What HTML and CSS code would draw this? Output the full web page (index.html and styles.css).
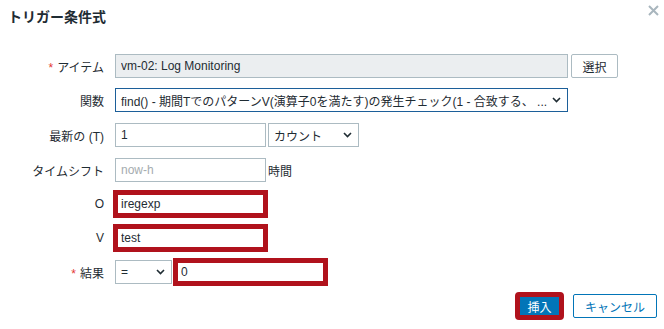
FILE: index.html
```html
<!DOCTYPE html>
<html lang="ja">
<head>
    <meta charset="UTF-8">
    <title>トリガー条件式</title>
    <link rel="stylesheet" href="styles.css">
</head>
<body>
    <div class="dialog">
        <div class="dialog-head">
            <h4>トリガー条件式</h4>
            <button class="close" title="閉じる">
                <svg width="11" height="11" viewBox="0 0 11 11"><path d="M1 1 L10 10 M10 1 L1 10" stroke="#a9b6be" stroke-width="2" fill="none"/></svg>
            </button>
        </div>

        <div class="form">
            <div class="row">
                <label class="req">アイテム</label>
                <div class="field">
                    <input type="text" class="w-wide" value="vm-02: Log Monitoring" readonly>
                    <button class="btn-alt">選択</button>
                </div>
            </div>
            <div class="row">
                <label>関数</label>
                <div class="field">
                    <div class="select w-wide focused">
                        <span>find() - 期間TでのパターンV(演算子0を満たす)の発生チェック(1 - 合致する、 ...</span>
                        <svg class="chev" width="9" height="6" viewBox="0 0 9 6"><path d="M1 1 L4.5 4.5 L8 1" stroke="#1f2c33" stroke-width="1.6" fill="none"/></svg>
                    </div>
                </div>
            </div>
            <div class="row row-latest">
                <label>最新の (T)</label>
                <div class="field">
                    <input type="text" class="w-mid" value="1">
                    <div class="select w-unit">
                        <span>カウント</span>
                        <svg class="chev" width="9" height="6" viewBox="0 0 9 6"><path d="M1 1 L4.5 4.5 L8 1" stroke="#1f2c33" stroke-width="1.6" fill="none"/></svg>
                    </div>
                </div>
            </div>
            <div class="row">
                <label>タイムシフト</label>
                <div class="field">
                    <input type="text" class="w-mid" placeholder="now-h">
                    <span class="suffix">時間</span>
                </div>
            </div>
            <div class="row">
                <label>O</label>
                <div class="field">
                    <input type="text" class="w-mid marked" value="iregexp">
                </div>
            </div>
            <div class="row">
                <label>V</label>
                <div class="field">
                    <input type="text" class="w-mid marked" value="test">
                </div>
            </div>
            <div class="row">
                <label class="req">結果</label>
                <div class="field">
                    <div class="select w-op">
                        <span>=</span>
                        <svg class="chev" width="9" height="6" viewBox="0 0 9 6"><path d="M1 1 L4.5 4.5 L8 1" stroke="#1f2c33" stroke-width="1.6" fill="none"/></svg>
                    </div>
                    <input type="text" class="w-mid marked" value="0">
                </div>
            </div>
        </div>

        <div class="dialog-foot">
            <button class="btn-main marked">挿入</button>
            <button class="btn-cancel">キャンセル</button>
        </div>
    </div>
</body>
</html>
```
FILE: styles.css
```css
body {
    margin: 0;
    background: #fff;
    font-family: 'Liberation Sans', Arial, 'Noto Sans CJK JP', sans-serif;
    font-size: 12px;
    color: #1f2c33;
}
.dialog {
    width: 664px;
    height: 329px;
    box-sizing: border-box;
}
.dialog-head {
    display: flex;
    justify-content: space-between;
    align-items: flex-start;
    padding: 7px 5px 0 8px;
}
.dialog-head h4 {
    margin: 0;
    font-size: 14px;
    line-height: 20px;
    font-weight: bold;
    color: #1f2c33;
}
.close {
    border: none;
    background: none;
    padding: 0;
    margin-top: -2px;
    width: 11px;
    height: 11px;
    cursor: pointer;
}
.close svg {
    display: block;
}
.form {
    margin-top: 27px;
}
.row {
    display: flex;
    align-items: center;
    height: 24px;
    margin-bottom: 10px;
}
.row-latest {
    height: 26px;
}
.row label {
    width: 104px;
    text-align: right;
    margin-right: 11px;
    flex-shrink: 0;
}
.row label.req::before {
    content: "*";
    color: #e33734;
    margin-right: 4px;
}
.field {
    display: flex;
    align-items: center;
}
input[type="text"] {
    box-sizing: border-box;
    height: 24px;
    border: 1px solid #acbbc2;
    background: #fff;
    padding: 0 5px;
    margin: 0;
    font: inherit;
    color: #1f2c33;
    outline: none;
}
input[readonly] {
    background: #ebeef0;
}
input::placeholder {
    color: #a5acb0;
}
.w-wide {
    width: 453px;
}
.w-mid {
    width: 151px;
}
.w-unit {
    width: 91px;
    margin-left: 2px;
}
.w-op {
    width: 57px;
    margin-right: 3px;
}
.select {
    box-sizing: border-box;
    height: 24px;
    border: 1px solid #acbbc2;
    background: #fff;
    display: flex;
    align-items: center;
    justify-content: space-between;
    padding: 0 6px 0 5px;
    white-space: nowrap;
    overflow: hidden;
}
.select.focused {
    border-color: #1c5f99;
}
.chev {
    flex-shrink: 0;
    margin-left: 4px;
}
.suffix {
    margin-left: 2px;
}
.marked {
    outline: 5px solid #b0121c !important;
    outline-offset: -3px;
}
.btn-alt {
    box-sizing: border-box;
    height: 24px;
    width: 47px;
    margin-left: 3px;
    border: 1px solid #acbbc2;
    border-radius: 2px;
    background: #fff;
    color: #1f2c33;
    font: inherit;
    padding: 0;
}
.dialog-foot {
    display: flex;
    justify-content: flex-end;
    margin-top: 7px;
    padding-right: 7px;
}
.dialog-foot button {
    box-sizing: border-box;
    height: 24px;
    border-radius: 2px;
    font: inherit;
    padding: 0;
    cursor: pointer;
}
.btn-main {
    width: 45px;
    background: #0275b8;
    border: 1px solid #0275b8;
    color: #fff;
    font-weight: bold;
}
.btn-cancel {
    width: 84px;
    margin-left: 11px;
    background: #fff;
    border: 1px solid #0275b8;
    color: #0275b8;
}
```
